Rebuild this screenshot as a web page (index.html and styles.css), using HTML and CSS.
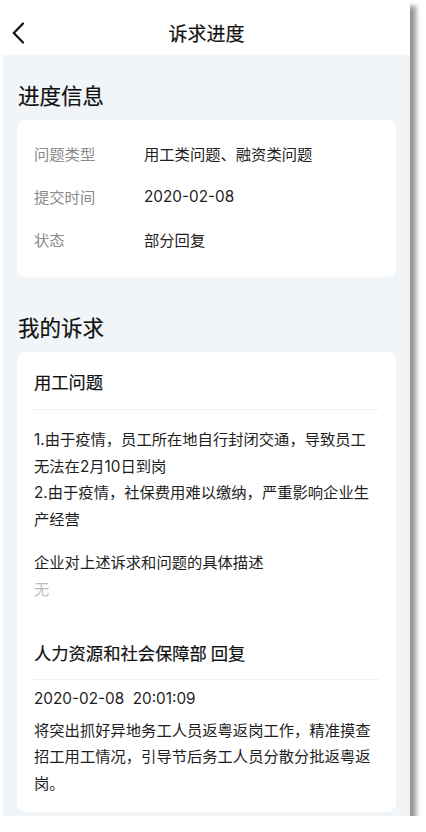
FILE: index.html
```html
<!DOCTYPE html>
<html lang="zh-CN">
<head>
<meta charset="utf-8">
<title>诉求进度</title>
<link rel="stylesheet" href="styles.css">
</head>
<body>
<div class="screen">
  <header class="nav">
    <div class="nav-left">
      <svg class="back" width="13" height="22" viewBox="0 0 13 22" aria-hidden="true">
        <path d="M11 1.5 L1.8 11 L11 20.5" fill="none" stroke="#111" stroke-width="2.2" stroke-linecap="round" stroke-linejoin="round"/>
      </svg>
    </div>
    <h1 class="nav-title">诉求进度</h1>
    <div class="nav-right"></div>
  </header>

  <main class="content">
    <h2 class="sec-title sec-first">进度信息</h2>
    <section class="card info">
      <div class="row"><span class="label">问题类型</span><span class="value">用工类问题、融资类问题</span></div>
      <div class="row"><span class="label">提交时间</span><span class="value">2020-02-08</span></div>
      <div class="row"><span class="label">状态</span><span class="value">部分回复</span></div>
    </section>

    <h2 class="sec-title sec-second">我的诉求</h2>
    <section class="card appeal">
      <h3 class="card-title">用工问题</h3>
      <p class="para first-para">1.由于疫情，员工所在地自行封闭交通，导致员工无法在2月10日到岗<br>2.由于疫情，社保费用难以缴纳，严重影响企业生产经营</p>
      <p class="para desc-label">企业对上述诉求和问题的具体描述</p>
      <p class="para empty">无</p>

      <h3 class="card-title reply-title">人力资源和社会保障部 回复</h3>
      <p class="para date">2020-02-08&nbsp;&nbsp;20:01:09</p>
      <p class="para reply-text">将突出抓好异地务工人员返粤返岗工作，精准摸查招工用工情况，引导节后务工人员分散分批返粤返岗。</p>
    </section>
  </main>
</div>
</body>
</html>
```

FILE: styles.css
```css
* {
  box-sizing: border-box;
}

html, body {
  margin: 0;
  padding: 0;
  background: #ffffff;
}

body {
  font-family: "Inter", "Noto Sans CJK SC", "Noto Sans", sans-serif;
  color: #1e1e1e;
}

.screen {
  width: 407px;
  height: 816px;
  margin-left: 3px;
  background: #f2f5f8;
  overflow: hidden;
  box-shadow: 6px 6px 5px rgba(0, 0, 0, 0.42);
}

.nav {
  height: 55px;
  padding-top: 10px;
  background: #ffffff;
  display: grid;
  grid-template-columns: 1fr auto 1fr;
  align-items: center;
}

.nav-left {
  padding-left: 9px;
  display: flex;
  align-items: center;
  height: 45px;
}

.back {
  display: block;
}

.nav-title {
  margin: 0;
  font-size: 19px;
  font-weight: 400;
  -webkit-text-stroke: 0.2px #111111;
  line-height: 45px;
  color: #111111;
  font-family: "Noto Sans CJK SC", sans-serif;
}

.content {
  padding: 0 14px;
}

.sec-title {
  margin: 0;
  font-family: "Noto Sans CJK SC", sans-serif;
  font-size: 21.5px;
  font-weight: 400;
  -webkit-text-stroke: 0.2px #111111;
  line-height: 30px;
  color: #111111;
  padding-left: 1px;
}

.sec-first {
  margin-top: 25px;
  margin-bottom: 10px;
}

.sec-second {
  margin-top: 35px;
  margin-bottom: 10px;
}

.card {
  background: #ffffff;
  border-radius: 9px;
}

.info {
  padding: 11.5px 17px 16.5px;
}

.row {
  display: flex;
  align-items: center;
  height: 43px;
  font-size: 15.3px;
}

.label {
  width: 110px;
  flex: none;
  color: #8a8a8a;
}

.value {
  color: #1e1e1e;
}

.appeal {
  padding: 15px 17px 15px;
}

.card-title {
  margin: 0;
  font-family: "Noto Sans CJK SC", sans-serif;
  font-size: 17.3px;
  font-weight: 400;
  -webkit-text-stroke: 0.2px #111111;
  line-height: 30px;
  color: #111111;
  padding-bottom: 12px;
  border-bottom: 1px solid #efefef;
}

.reply-title {
  margin-top: 35px;
  padding-bottom: 11px;
}

.para {
  margin: 0;
  font-size: 15.3px;
  line-height: 26.5px;
  color: #1e1e1e;
}

.first-para {
  margin-top: 17px;
}

.desc-label {
  margin-top: 17px;
}

.empty {
  color: #bdbdbd;
}

.date {
  margin-top: 5.5px;
}

.reply-text {
  margin-top: 5.5px;
}
```
